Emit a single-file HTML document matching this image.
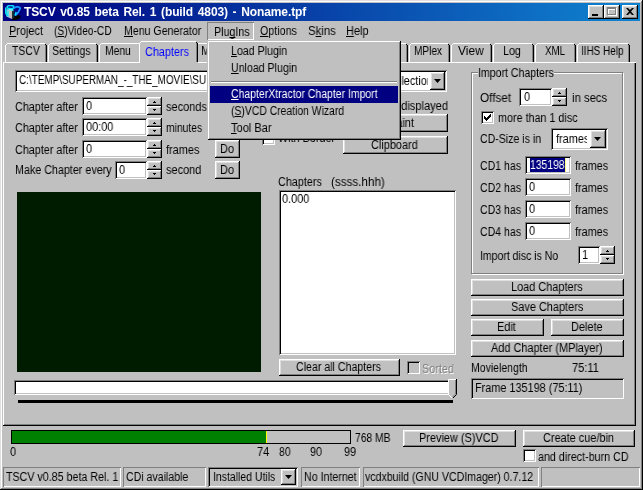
<!DOCTYPE html>
<html><head><meta charset="utf-8"><title>TSCV</title><style>
html,body{margin:0;padding:0}
body{width:643px;height:490px;overflow:hidden;background:#c0c0c0;position:relative;font:12px/16px "Liberation Sans",sans-serif;color:#000}
body div,body svg,body i{position:absolute;display:block}
.t{height:16px;line-height:16px;white-space:pre;transform-origin:0 50%;will-change:transform}
.t u{text-decoration:underline;text-decoration-skip-ink:none;text-underline-offset:1px;text-decoration-thickness:1px}
.btn{background:#c0c0c0;box-shadow:inset -1px -1px #000, inset 1px 1px #fff, inset -2px -2px #808080, inset 2px 2px #dfdfdf}
.edit{box-shadow:inset 1px 1px #808080, inset -1px -1px #fff, inset 2px 2px #000, inset -2px -2px #c0c0c0}
.tab{background:#c0c0c0}
</style></head><body>
<div class="" style="left:0px;top:0px;width:642px;height:1px;background:#dfdfdf"></div>
<div class="" style="left:0px;top:0px;width:1px;height:489px;background:#dfdfdf"></div>
<div class="" style="left:1px;top:1px;width:640px;height:1px;background:#fff"></div>
<div class="" style="left:1px;top:1px;width:1px;height:488px;background:#fff"></div>
<div class="" style="left:1px;top:488px;width:641px;height:1px;background:#808080"></div>
<div class="" style="left:641px;top:1px;width:1px;height:488px;background:#808080"></div>
<div class="" style="left:0px;top:489px;width:643px;height:1px;background:#000"></div>
<div class="" style="left:642px;top:0px;width:1px;height:490px;background:#000"></div>
<div class="" style="left:3px;top:3px;width:637px;height:18px;background:linear-gradient(to right,#000080,#1084d0)"></div>
<svg style="left:5px;top:5px" width="16" height="15" viewBox="0 0 16 15">
<polygon points="7,14.5 10,10 15.5,10.5 15.5,13 11,15 7,15" fill="#000"/>
<polygon points="1.5,4 7,6 7,14 1.5,11.5" fill="#c8c0c0"/>
<polygon points="7,6 9.2,5 9.2,13 7,14" fill="#183030"/>
<polygon points="1.5,4 5,2.6 9.2,5 7,6.2" fill="#50f0ff"/>
<polygon points="4,4.2 6.2,4.2 6.6,5.2 4.4,5.2" fill="#fff"/>
<polygon points="1.5,5 4,6 4.2,12.5 1.5,11" fill="#30e8ff" opacity="0.75"/>
<ellipse cx="5.5" cy="2.1" rx="3.4" ry="1.7" fill="none" stroke="#00e8ff" stroke-width="1.5"/>
<path d="M0.8,2.5 L0.8,8 L2.5,11" fill="none" stroke="#00e0f0" stroke-width="1.6"/>
<path d="M9,3.2 Q12.5,0.2 15.3,3.2 Q14,7 10.3,10.5" fill="none" stroke="#1890ff" stroke-width="1.8"/>
<path d="M11.2,7 L10,10.5" fill="none" stroke="#00e8ff" stroke-width="1.4"/>
</svg>
<div class="btn" style="left:588px;top:5px;width:16px;height:14px;"><div style="left:4px;top:9px;width:6px;height:2px;background:#000"></div></div>
<div class="btn" style="left:604px;top:5px;width:16px;height:14px;"><div style="left:4px;top:3px;width:9px;height:8px;box-sizing:border-box;border:1px solid #fff;border-top:2px solid #fff"></div><div style="left:3px;top:2px;width:9px;height:8px;box-sizing:border-box;border:1px solid #808080;border-top:2px solid #808080"></div></div>
<div class="btn" style="left:622px;top:5px;width:16px;height:14px;"><svg style="left:4px;top:3px" width="8" height="7" viewBox="0 0 8 7"><path d="M0,0 L2,0 L4,2 L6,0 L8,0 L5,3.5 L8,7 L6,7 L4,5 L2,7 L0,7 L3,3.5 Z" fill="#000"/></svg></div>
<div class="" style="left:207px;top:22px;width:47px;height:18px;box-shadow:inset 1px 1px #808080, inset -1px -1px #fff"></div>
<div class="" style="left:3px;top:62px;width:633px;height:364px;background:#c0c0c0;box-shadow:inset 0 -1px #000, inset 1px 0 #fff, inset 0 1px #fff, inset -1px 0 #000, inset -2px -2px #808080;z-index:2"></div>
<div class="tab" style="left:5px;top:43px;width:42px;height:19px;z-index:1"><i style="left:0;top:2px;width:1px;bottom:0;background:#fff"></i><i style="left:1px;top:1px;width:1px;height:1px;background:#fff"></i><i style="left:2px;top:0;right:2px;height:1px;background:#fff"></i><i style="right:1px;top:1px;width:1px;height:1px;background:#000"></i><i style="right:0;top:2px;width:1px;bottom:0px;background:#000"></i><i style="right:1px;top:2px;width:1px;bottom:0px;background:#808080"></i></div>
<div class="tab" style="left:48px;top:43px;width:50px;height:19px;z-index:1"><i style="left:0;top:2px;width:1px;bottom:0;background:#fff"></i><i style="left:1px;top:1px;width:1px;height:1px;background:#fff"></i><i style="left:2px;top:0;right:2px;height:1px;background:#fff"></i><i style="right:1px;top:1px;width:1px;height:1px;background:#000"></i><i style="right:0;top:2px;width:1px;bottom:0px;background:#000"></i><i style="right:1px;top:2px;width:1px;bottom:0px;background:#808080"></i></div>
<div class="tab" style="left:99px;top:43px;width:42px;height:19px;z-index:1"><i style="left:0;top:2px;width:1px;bottom:0;background:#fff"></i><i style="left:1px;top:1px;width:1px;height:1px;background:#fff"></i><i style="left:2px;top:0;right:2px;height:1px;background:#fff"></i><i style="right:1px;top:1px;width:1px;height:1px;background:#000"></i><i style="right:0;top:2px;width:1px;bottom:0px;background:#000"></i><i style="right:1px;top:2px;width:1px;bottom:0px;background:#808080"></i></div>
<div class="tab" style="left:139px;top:41px;width:59px;height:22px;z-index:3"><i style="left:0;top:2px;width:1px;bottom:0;background:#fff"></i><i style="left:1px;top:1px;width:1px;height:1px;background:#fff"></i><i style="left:2px;top:0;right:2px;height:1px;background:#fff"></i><i style="right:1px;top:1px;width:1px;height:1px;background:#000"></i><i style="right:0;top:2px;width:1px;bottom:1px;background:#000"></i><i style="right:1px;top:2px;width:1px;bottom:1px;background:#808080"></i></div>
<div class="tab" style="left:196px;top:43px;width:54px;height:19px;z-index:1"><i style="left:0;top:2px;width:1px;bottom:0;background:#fff"></i><i style="left:1px;top:1px;width:1px;height:1px;background:#fff"></i><i style="left:2px;top:0;right:2px;height:1px;background:#fff"></i><i style="right:1px;top:1px;width:1px;height:1px;background:#000"></i><i style="right:0;top:2px;width:1px;bottom:0px;background:#000"></i><i style="right:1px;top:2px;width:1px;bottom:0px;background:#808080"></i></div>
<div class="tab" style="left:251px;top:43px;width:49px;height:19px;z-index:1"><i style="left:0;top:2px;width:1px;bottom:0;background:#fff"></i><i style="left:1px;top:1px;width:1px;height:1px;background:#fff"></i><i style="left:2px;top:0;right:2px;height:1px;background:#fff"></i><i style="right:1px;top:1px;width:1px;height:1px;background:#000"></i><i style="right:0;top:2px;width:1px;bottom:0px;background:#000"></i><i style="right:1px;top:2px;width:1px;bottom:0px;background:#808080"></i></div>
<div class="tab" style="left:301px;top:43px;width:49px;height:19px;z-index:1"><i style="left:0;top:2px;width:1px;bottom:0;background:#fff"></i><i style="left:1px;top:1px;width:1px;height:1px;background:#fff"></i><i style="left:2px;top:0;right:2px;height:1px;background:#fff"></i><i style="right:1px;top:1px;width:1px;height:1px;background:#000"></i><i style="right:0;top:2px;width:1px;bottom:0px;background:#000"></i><i style="right:1px;top:2px;width:1px;bottom:0px;background:#808080"></i></div>
<div class="tab" style="left:351px;top:43px;width:57px;height:19px;z-index:1"><i style="left:0;top:2px;width:1px;bottom:0;background:#fff"></i><i style="left:1px;top:1px;width:1px;height:1px;background:#fff"></i><i style="left:2px;top:0;right:2px;height:1px;background:#fff"></i><i style="right:1px;top:1px;width:1px;height:1px;background:#000"></i><i style="right:0;top:2px;width:1px;bottom:0px;background:#000"></i><i style="right:1px;top:2px;width:1px;bottom:0px;background:#808080"></i></div>
<div class="tab" style="left:409px;top:43px;width:41px;height:19px;z-index:1"><i style="left:0;top:2px;width:1px;bottom:0;background:#fff"></i><i style="left:1px;top:1px;width:1px;height:1px;background:#fff"></i><i style="left:2px;top:0;right:2px;height:1px;background:#fff"></i><i style="right:1px;top:1px;width:1px;height:1px;background:#000"></i><i style="right:0;top:2px;width:1px;bottom:0px;background:#000"></i><i style="right:1px;top:2px;width:1px;bottom:0px;background:#808080"></i></div>
<div class="tab" style="left:451px;top:43px;width:41px;height:19px;z-index:1"><i style="left:0;top:2px;width:1px;bottom:0;background:#fff"></i><i style="left:1px;top:1px;width:1px;height:1px;background:#fff"></i><i style="left:2px;top:0;right:2px;height:1px;background:#fff"></i><i style="right:1px;top:1px;width:1px;height:1px;background:#000"></i><i style="right:0;top:2px;width:1px;bottom:0px;background:#000"></i><i style="right:1px;top:2px;width:1px;bottom:0px;background:#808080"></i></div>
<div class="tab" style="left:493px;top:43px;width:41px;height:19px;z-index:1"><i style="left:0;top:2px;width:1px;bottom:0;background:#fff"></i><i style="left:1px;top:1px;width:1px;height:1px;background:#fff"></i><i style="left:2px;top:0;right:2px;height:1px;background:#fff"></i><i style="right:1px;top:1px;width:1px;height:1px;background:#000"></i><i style="right:0;top:2px;width:1px;bottom:0px;background:#000"></i><i style="right:1px;top:2px;width:1px;bottom:0px;background:#808080"></i></div>
<div class="tab" style="left:535px;top:43px;width:41px;height:19px;z-index:1"><i style="left:0;top:2px;width:1px;bottom:0;background:#fff"></i><i style="left:1px;top:1px;width:1px;height:1px;background:#fff"></i><i style="left:2px;top:0;right:2px;height:1px;background:#fff"></i><i style="right:1px;top:1px;width:1px;height:1px;background:#000"></i><i style="right:0;top:2px;width:1px;bottom:0px;background:#000"></i><i style="right:1px;top:2px;width:1px;bottom:0px;background:#808080"></i></div>
<div class="tab" style="left:577px;top:43px;width:53px;height:19px;z-index:1"><i style="left:0;top:2px;width:1px;bottom:0;background:#fff"></i><i style="left:1px;top:1px;width:1px;height:1px;background:#fff"></i><i style="left:2px;top:0;right:2px;height:1px;background:#fff"></i><i style="right:1px;top:1px;width:1px;height:1px;background:#000"></i><i style="right:0;top:2px;width:1px;bottom:0px;background:#000"></i><i style="right:1px;top:2px;width:1px;bottom:0px;background:#808080"></i></div>
<div class="edit" style="left:15px;top:70px;width:337px;height:22px;background:#fff;z-index:5;"></div>
<div class="edit" style="left:354px;top:70px;width:93px;height:22px;background:#fff;z-index:5;"></div>
<div class="btn" style="left:430px;top:72px;width:15px;height:18px;z-index:7;"><svg style="left:4px;top:7px" width="7" height="4" viewBox="0 0 7 4"><path d="M0,0 L7,0 L3.5,4 Z" fill="#000"/></svg></div>
<div class="edit" style="left:82px;top:97px;width:65px;height:18px;background:#fff;z-index:5;"></div>
<div class="btn" style="left:147px;top:97px;width:15px;height:9px;z-index:5;"><svg style="left:6px;top:4px" width="3" height="2" viewBox="0 0 3 2" shape-rendering="crispEdges"><path d="M1,0h1v1h-1z M0,1h3v1h-3z" fill="#000"/></svg></div>
<div class="btn" style="left:147px;top:106px;width:15px;height:9px;z-index:5;"><svg style="left:6px;top:3px" width="3" height="2" viewBox="0 0 3 2" shape-rendering="crispEdges"><path d="M0,0h3v1h-3z M1,1h1v1h-1z" fill="#000"/></svg></div>
<div class="edit" style="left:82px;top:118px;width:65px;height:18px;background:#fff;z-index:5;"></div>
<div class="btn" style="left:147px;top:118px;width:15px;height:9px;z-index:5;"><svg style="left:6px;top:4px" width="3" height="2" viewBox="0 0 3 2" shape-rendering="crispEdges"><path d="M1,0h1v1h-1z M0,1h3v1h-3z" fill="#000"/></svg></div>
<div class="btn" style="left:147px;top:127px;width:15px;height:9px;z-index:5;"><svg style="left:6px;top:3px" width="3" height="2" viewBox="0 0 3 2" shape-rendering="crispEdges"><path d="M0,0h3v1h-3z M1,1h1v1h-1z" fill="#000"/></svg></div>
<div class="edit" style="left:82px;top:140px;width:65px;height:18px;background:#fff;z-index:5;"></div>
<div class="btn" style="left:147px;top:140px;width:15px;height:9px;z-index:5;"><svg style="left:6px;top:4px" width="3" height="2" viewBox="0 0 3 2" shape-rendering="crispEdges"><path d="M1,0h1v1h-1z M0,1h3v1h-3z" fill="#000"/></svg></div>
<div class="btn" style="left:147px;top:149px;width:15px;height:9px;z-index:5;"><svg style="left:6px;top:3px" width="3" height="2" viewBox="0 0 3 2" shape-rendering="crispEdges"><path d="M0,0h3v1h-3z M1,1h1v1h-1z" fill="#000"/></svg></div>
<div class="edit" style="left:115px;top:161px;width:32px;height:18px;background:#fff;z-index:5;"></div>
<div class="btn" style="left:147px;top:161px;width:15px;height:9px;z-index:5;"><svg style="left:6px;top:4px" width="3" height="2" viewBox="0 0 3 2" shape-rendering="crispEdges"><path d="M1,0h1v1h-1z M0,1h3v1h-3z" fill="#000"/></svg></div>
<div class="btn" style="left:147px;top:170px;width:15px;height:9px;z-index:5;"><svg style="left:6px;top:3px" width="3" height="2" viewBox="0 0 3 2" shape-rendering="crispEdges"><path d="M0,0h3v1h-3z M1,1h1v1h-1z" fill="#000"/></svg></div>
<div class="btn" style="left:215px;top:97px;width:25px;height:18px;z-index:5;"></div>
<div class="btn" style="left:215px;top:118px;width:25px;height:18px;z-index:5;"></div>
<div class="btn" style="left:215px;top:140px;width:25px;height:18px;z-index:5;"></div>
<div class="btn" style="left:215px;top:161px;width:25px;height:18px;z-index:5;"></div>
<div class="edit" style="left:262px;top:132px;width:13px;height:13px;background:#fff;z-index:5;"></div>
<div class="btn" style="left:343px;top:114px;width:105px;height:18px;z-index:5;"></div>
<div class="btn" style="left:343px;top:136px;width:105px;height:18px;z-index:5;"></div>
<div class="" style="left:17px;top:192px;width:244px;height:180px;background:#001c00;z-index:5;"></div>
<div class="edit" style="left:279px;top:190px;width:177px;height:165px;background:#fff;z-index:5;"></div>
<div class="btn" style="left:279px;top:359px;width:121px;height:17px;z-index:5;"></div>
<div class="edit" style="left:407px;top:361px;width:13px;height:13px;background:#c0c0c0;z-index:5;"></div>
<div class="edit" style="left:14px;top:380px;width:437px;height:15px;background:#fff;z-index:5;"></div>
<div class="" style="left:18px;top:400px;width:435px;height:3px;background:#000;z-index:5;"></div>
<svg style="left:448px;top:379px;z-index:8" width="9" height="20" viewBox="0 0 9 20">
<path d="M0,0 H9 V16 L4.5,20 L0,16 Z" fill="#c0c0c0"/>
<path d="M0.5,16 V0.5 H8" fill="none" stroke="#fff"/>
<path d="M8.5,0 V15.5 L4.5,19.5" fill="none" stroke="#000"/>
<path d="M7.5,1 V15 L4.5,18" fill="none" stroke="#808080"/>
<path d="M0.5,15.5 L4.5,19.5" fill="none" stroke="#fff"/>
</svg>
<div class="" style="left:472px;top:73px;width:152px;height:202px;box-shadow:inset 1px 1px #fff, inset -1px -1px #fff;z-index:4"></div>
<div class="" style="left:471px;top:72px;width:152px;height:202px;box-shadow:inset 1px 1px #808080, inset -1px -1px #808080;z-index:5;"></div>
<div class="" style="left:478px;top:66px;width:76px;height:14px;background:#c0c0c0;z-index:5"></div>
<div class="edit" style="left:519px;top:88px;width:33px;height:18px;background:#fff;z-index:5;"></div>
<div class="btn" style="left:552px;top:88px;width:15px;height:9px;z-index:5;"><svg style="left:6px;top:4px" width="3" height="2" viewBox="0 0 3 2" shape-rendering="crispEdges"><path d="M1,0h1v1h-1z M0,1h3v1h-3z" fill="#000"/></svg></div>
<div class="btn" style="left:552px;top:97px;width:15px;height:9px;z-index:5;"><svg style="left:6px;top:3px" width="3" height="2" viewBox="0 0 3 2" shape-rendering="crispEdges"><path d="M0,0h3v1h-3z M1,1h1v1h-1z" fill="#000"/></svg></div>
<div class="edit" style="left:481px;top:111px;width:13px;height:13px;background:#fff;z-index:5;"><svg style="left:3px;top:3px" width="7" height="7" viewBox="0 0 7 7" shape-rendering="crispEdges"><path d="M0,2h1v3h-1z M1,3h1v3h-1z M2,4h1v3h-1z M3,3h1v3h-1z M4,2h1v3h-1z M5,1h1v3h-1z M6,0h1v3h-1z" fill="#000"/></svg></div>
<div class="edit" style="left:551px;top:128px;width:57px;height:22px;background:#fff;z-index:5;"></div>
<div class="btn" style="left:590px;top:130px;width:16px;height:18px;z-index:7;"><svg style="left:4px;top:7px" width="7" height="4" viewBox="0 0 7 4"><path d="M0,0 L7,0 L3.5,4 Z" fill="#000"/></svg></div>
<div class="edit" style="left:525px;top:156px;width:46px;height:18px;background:#fff;z-index:5;"></div>
<div class="" style="left:530px;top:158px;width:35px;height:14px;background:#000080;z-index:6"></div>
<div class="" style="left:565px;top:158px;width:1px;height:14px;background:#ffff80;z-index:7"></div>
<div class="edit" style="left:525px;top:178px;width:46px;height:18px;background:#fff;z-index:5;"></div>
<div class="edit" style="left:525px;top:200px;width:46px;height:18px;background:#fff;z-index:5;"></div>
<div class="edit" style="left:525px;top:222px;width:46px;height:18px;background:#fff;z-index:5;"></div>
<div class="edit" style="left:578px;top:246px;width:22px;height:18px;background:#fff;z-index:5;"></div>
<div class="btn" style="left:600px;top:246px;width:15px;height:9px;z-index:5;"><svg style="left:6px;top:4px" width="3" height="2" viewBox="0 0 3 2" shape-rendering="crispEdges"><path d="M1,0h1v1h-1z M0,1h3v1h-3z" fill="#000"/></svg></div>
<div class="btn" style="left:600px;top:255px;width:15px;height:9px;z-index:5;"><svg style="left:6px;top:3px" width="3" height="2" viewBox="0 0 3 2" shape-rendering="crispEdges"><path d="M0,0h3v1h-3z M1,1h1v1h-1z" fill="#000"/></svg></div>
<div class="btn" style="left:471px;top:279px;width:153px;height:17px;z-index:5;"></div>
<div class="btn" style="left:471px;top:299px;width:153px;height:17px;z-index:5;"></div>
<div class="btn" style="left:471px;top:319px;width:73px;height:17px;z-index:5;"></div>
<div class="btn" style="left:551px;top:319px;width:73px;height:17px;z-index:5;"></div>
<div class="btn" style="left:471px;top:340px;width:153px;height:17px;z-index:5;"></div>
<div class="edit" style="left:471px;top:378px;width:153px;height:21px;background:#c0c0c0;z-index:5;"></div>
<div class="" style="left:11px;top:430px;width:340px;height:14px;background:#c0c0c0;box-shadow:inset 0 0 0 1px #000;z-index:5;"></div>
<div class="" style="left:12px;top:431px;width:254px;height:12px;background:#008000;z-index:6"></div>
<div class="" style="left:266px;top:431px;width:1px;height:12px;background:#ffff00;z-index:6"></div>
<div class="btn" style="left:403px;top:430px;width:113px;height:17px;z-index:5;"></div>
<div class="btn" style="left:523px;top:430px;width:112px;height:17px;z-index:5;"></div>
<div class="edit" style="left:523px;top:449px;width:13px;height:13px;background:#fff;z-index:5;"></div>
<div class="" style="left:3px;top:467px;width:118px;height:20px;box-shadow:inset 1px 1px #808080, inset -1px -1px #fff"></div>
<div class="" style="left:123px;top:467px;width:83px;height:20px;box-shadow:inset 1px 1px #808080, inset -1px -1px #fff"></div>
<div class="edit" style="left:208px;top:467px;width:90px;height:20px;background:#c0c0c0;z-index:5;"></div>
<div class="btn" style="left:281px;top:469px;width:15px;height:16px;z-index:7;"><svg style="left:4px;top:6px" width="7" height="4" viewBox="0 0 7 4"><path d="M0,0 L7,0 L3.5,4 Z" fill="#000"/></svg></div>
<div class="" style="left:301px;top:467px;width:59px;height:20px;box-shadow:inset 1px 1px #808080, inset -1px -1px #fff"></div>
<div class="" style="left:363px;top:467px;width:176px;height:20px;box-shadow:inset 1px 1px #808080, inset -1px -1px #fff"></div>
<div class="" style="left:541px;top:467px;width:99px;height:20px;box-shadow:inset 1px 1px #808080, inset -1px -1px #fff"></div>
<div class="" style="left:207px;top:40px;width:194px;height:100px;background:#c0c0c0;z-index:20;box-shadow:inset 1px 1px #c0c0c0, inset -1px -1px #000, inset 2px 2px #fff, inset -2px -2px #808080"></div>
<div class="" style="left:210px;top:86px;width:188px;height:17px;background:#000080;z-index:21"></div>
<div class="" style="left:211px;top:81px;width:186px;height:1px;background:#808080;z-index:21"></div>
<div class="" style="left:211px;top:82px;width:186px;height:1px;background:#fff;z-index:21"></div>
<div class="t" style="top:4px;color:#fff;letter-spacing:-0.11px;word-spacing:1.5px;font-weight:bold;left:23.5px;">TSCV v0.85 beta Rel. 1 (build 4803) - Noname.tpf</div>
<div class="t" style="top:23px;color:#000;left:8.5px;transform:scaleX(0.9101);"><u>P</u>roject</div>
<div class="t" style="top:23px;color:#000;left:53.7px;transform:scaleX(0.8494);">(<u>S</u>)Video-CD</div>
<div class="t" style="top:23px;color:#000;left:123.9px;transform:scaleX(0.8834);"><u>M</u>enu Generator</div>
<div class="t" style="top:24px;color:#000;left:213.9px;transform:scaleX(0.8918);">Plu<u>g</u>Ins</div>
<div class="t" style="top:23px;color:#000;left:259.5px;transform:scaleX(0.8922);"><u>O</u>ptions</div>
<div class="t" style="top:23px;color:#000;left:308.3px;transform:scaleX(0.9474);">S<u>k</u>ins</div>
<div class="t" style="top:23px;color:#000;left:345.5px;transform:scaleX(0.9154);"><u>H</u>elp</div>
<div class="t" style="top:43px;color:#000;left:11.5px;transform:scaleX(0.8714);z-index:2;">TSCV</div>
<div class="t" style="top:43px;color:#000;left:52.2px;transform:scaleX(0.8925);z-index:2;">Settings</div>
<div class="t" style="top:43px;color:#000;left:105.3px;transform:scaleX(0.8591);z-index:2;">Menu</div>
<div class="t" style="top:43.5px;color:#0000ff;left:145.1px;transform:scaleX(0.9034);z-index:4;">Chapters</div>
<div class="t" style="top:43px;color:#000;left:201.1px;transform:scaleX(0.91);z-index:2;">M</div>
<div class="t" style="top:43px;color:#000;left:413.9px;transform:scaleX(0.8397);z-index:2;">MPlex</div>
<div class="t" style="top:43px;color:#000;left:457.5px;transform:scaleX(0.9924);z-index:2;">View</div>
<div class="t" style="top:43px;color:#000;left:503.2px;transform:scaleX(0.8936);z-index:2;">Log</div>
<div class="t" style="top:43px;color:#000;left:544.5px;transform:scaleX(0.8142);z-index:2;">XML</div>
<div class="t" style="top:43px;color:#000;left:581.3px;transform:scaleX(0.8275);z-index:2;">IIHS Help</div>
<div class="t" style="top:72px;color:#000;left:19px;transform:scaleX(0.8253);z-index:6;">C:\TEMP\SUPERMAN_-_THE_MOVIE\SU</div>
<div class="t" style="top:73px;color:#000;left:387.5px;transform:scaleX(0.91);z-index:6;overflow:hidden;width:44.0px;">Selection</div>
<div class="t" style="top:98.5px;color:#000;left:14.5px;transform:scaleX(0.898);z-index:6;">Chapter after</div>
<div class="t" style="top:98px;color:#000;left:86px;transform:scaleX(0.91);z-index:6;">0</div>
<div class="t" style="top:98.5px;color:#000;left:166.2px;transform:scaleX(0.9149);z-index:6;">seconds</div>
<div class="t" style="top:119.5px;color:#000;left:14.5px;transform:scaleX(0.898);z-index:6;">Chapter after</div>
<div class="t" style="top:119px;color:#000;left:86px;transform:scaleX(0.91);z-index:6;">00:00</div>
<div class="t" style="top:119.5px;color:#000;left:166.2px;transform:scaleX(0.8613);z-index:6;">minutes</div>
<div class="t" style="top:141.5px;color:#000;left:14.5px;transform:scaleX(0.898);z-index:6;">Chapter after</div>
<div class="t" style="top:141px;color:#000;left:86px;transform:scaleX(0.91);z-index:6;">0</div>
<div class="t" style="top:141.5px;color:#000;left:166.2px;transform:scaleX(0.9104);z-index:6;">frames</div>
<div class="t" style="top:162px;color:#000;left:14.5px;transform:scaleX(0.8941);z-index:6;">Make Chapter every</div>
<div class="t" style="top:162px;color:#000;left:119px;transform:scaleX(0.91);z-index:6;">0</div>
<div class="t" style="top:162px;color:#000;left:166.2px;transform:scaleX(0.9121);z-index:6;">second</div>
<div class="t" style="top:97.5px;color:#000;left:219.8px;transform:scaleX(0.91);z-index:6;">Do</div>
<div class="t" style="top:118.5px;color:#000;left:219.8px;transform:scaleX(0.91);z-index:6;">Do</div>
<div class="t" style="top:140.5px;color:#000;left:219.8px;transform:scaleX(0.91);z-index:6;">Do</div>
<div class="t" style="top:161.5px;color:#000;left:219.8px;transform:scaleX(0.91);z-index:6;">Do</div>
<div class="t" style="top:130px;color:#000;left:277.5px;transform:scaleX(0.9012);z-index:6;">With Border</div>
<div class="t" style="top:97.5px;color:#000;left:365.5px;transform:scaleX(0.9254);z-index:6;">Frame displayed</div>
<div class="t" style="top:114.5px;color:#000;left:376.3px;transform:scaleX(0.9184);z-index:6;">Repaint</div>
<div class="t" style="top:136.5px;color:#000;left:371.4px;transform:scaleX(0.91);z-index:6;">Clipboard</div>
<div class="t" style="top:173.5px;color:#000;left:278.3px;transform:scaleX(0.8993);z-index:6;">Chapters</div>
<div class="t" style="top:173.5px;color:#000;left:331.3px;transform:scaleX(0.9718);z-index:6;">(ssss.hhh)</div>
<div class="t" style="top:191px;color:#000;left:282.3px;transform:scaleX(0.91);z-index:6;">0.000</div>
<div class="t" style="top:359px;color:#000;left:296.3px;transform:scaleX(0.885);z-index:6;">Clear all Chapters</div>
<div class="t" style="top:361px;color:#808080;text-shadow:1px 1px 0 #fff;left:421.7px;transform:scaleX(0.9022);z-index:6;">Sorted</div>
<div class="t" style="top:65.3px;color:#000;left:477.8px;transform:scaleX(0.8809);z-index:6;">Import Chapters</div>
<div class="t" style="top:89.5px;color:#000;left:480px;transform:scaleX(0.9781);z-index:6;">Offset</div>
<div class="t" style="top:89px;color:#000;left:523.5px;transform:scaleX(0.91);z-index:6;">0</div>
<div class="t" style="top:89.5px;color:#000;left:571.9px;transform:scaleX(0.9422);z-index:6;">in secs</div>
<div class="t" style="top:109.5px;color:#000;left:498px;transform:scaleX(0.8972);z-index:6;">more than 1 disc</div>
<div class="t" style="top:130.5px;color:#000;left:480px;transform:scaleX(0.8809);z-index:6;">CD-Size is in</div>
<div class="t" style="top:131px;color:#000;left:555.5px;transform:scaleX(0.91);z-index:6;overflow:hidden;width:34.2px;">frames</div>
<div class="t" style="top:157.5px;color:#000;left:480px;transform:scaleX(0.8803);z-index:6;">CD1 has</div>
<div class="t" style="top:157.5px;color:#000;left:574.5px;transform:scaleX(0.9022);z-index:6;">frames</div>
<div class="t" style="top:157px;color:#fff;left:530px;transform:scaleX(0.864);z-index:7;">135198</div>
<div class="t" style="top:179.5px;color:#000;left:480px;transform:scaleX(0.8803);z-index:6;">CD2 has</div>
<div class="t" style="top:179.5px;color:#000;left:574.5px;transform:scaleX(0.9022);z-index:6;">frames</div>
<div class="t" style="top:179px;color:#000;left:529.2px;transform:scaleX(0.91);z-index:6;">0</div>
<div class="t" style="top:201.5px;color:#000;left:480px;transform:scaleX(0.8803);z-index:6;">CD3 has</div>
<div class="t" style="top:201.5px;color:#000;left:574.5px;transform:scaleX(0.9022);z-index:6;">frames</div>
<div class="t" style="top:201px;color:#000;left:529.2px;transform:scaleX(0.91);z-index:6;">0</div>
<div class="t" style="top:223.5px;color:#000;left:480px;transform:scaleX(0.8803);z-index:6;">CD4 has</div>
<div class="t" style="top:223.5px;color:#000;left:574.5px;transform:scaleX(0.9022);z-index:6;">frames</div>
<div class="t" style="top:223px;color:#000;left:529.2px;transform:scaleX(0.91);z-index:6;">0</div>
<div class="t" style="top:247.5px;color:#000;left:480px;transform:scaleX(0.874);z-index:6;">Import disc is No</div>
<div class="t" style="top:247px;color:#000;left:581.5px;transform:scaleX(0.91);z-index:6;">1</div>
<div class="t" style="top:279px;color:#000;left:511.0px;transform:scaleX(0.91);z-index:6;">Load Chapters</div>
<div class="t" style="top:299px;color:#000;left:510.7px;transform:scaleX(0.91);z-index:6;">Save Chapters</div>
<div class="t" style="top:319px;color:#000;left:497.4px;transform:scaleX(0.91);z-index:6;">Edit</div>
<div class="t" style="top:319px;color:#000;left:571.0px;transform:scaleX(0.91);z-index:6;">Delete</div>
<div class="t" style="top:340px;color:#000;left:491.0px;transform:scaleX(0.91);z-index:6;">Add Chapter (MPlayer)</div>
<div class="t" style="top:359.5px;color:#000;left:470.5px;transform:scaleX(0.8746);z-index:6;">Movielength</div>
<div class="t" style="top:359.5px;color:#000;left:572px;transform:scaleX(0.9197);z-index:6;">75:11</div>
<div class="t" style="top:380px;color:#000;left:475.2px;transform:scaleX(0.9062);z-index:6;">Frame 135198 (75:11)</div>
<div class="t" style="top:444px;color:#000;left:10px;transform:scaleX(0.91);z-index:5;">0</div>
<div class="t" style="top:444px;color:#000;left:257.2px;transform:scaleX(0.9132);z-index:5;">74</div>
<div class="t" style="top:444px;color:#000;left:278.5px;transform:scaleX(0.8683);z-index:5;">80</div>
<div class="t" style="top:444px;color:#000;left:310.2px;transform:scaleX(0.8908);z-index:5;">90</div>
<div class="t" style="top:444px;color:#000;left:343.5px;transform:scaleX(0.8982);z-index:5;">99</div>
<div class="t" style="top:429.5px;color:#000;left:354.5px;transform:scaleX(0.8607);z-index:5;">768 MB</div>
<div class="t" style="top:430px;color:#000;left:419.1px;transform:scaleX(0.91);z-index:6;">Preview (S)VCD</div>
<div class="t" style="top:430px;color:#000;left:542.8px;transform:scaleX(0.91);z-index:6;">Create cue/bin</div>
<div class="t" style="top:448.5px;color:#000;left:538.2px;transform:scaleX(0.8936);z-index:5;">and direct-burn CD</div>
<div class="t" style="top:469px;color:#000;left:5.5px;transform:scaleX(0.8899);">TSCV v0.85 beta Rel. 1</div>
<div class="t" style="top:469px;color:#000;left:125.8px;transform:scaleX(0.8811);">CDi available</div>
<div class="t" style="top:469px;color:#000;left:213px;transform:scaleX(0.8729);z-index:6;">Installed Utils</div>
<div class="t" style="top:469px;color:#000;left:303.5px;transform:scaleX(0.8859);">No Internet</div>
<div class="t" style="top:469px;color:#000;left:365.3px;transform:scaleX(0.8813);">vcdxbuild (GNU VCDImager) 0.7.12</div>
<div class="t" style="top:43px;color:#000;left:231px;transform:scaleX(0.885);z-index:22;"><u>L</u>oad Plugin</div>
<div class="t" style="top:59.5px;color:#000;left:231px;transform:scaleX(0.8847);z-index:22;"><u>U</u>nload Plugin</div>
<div class="t" style="top:85.5px;color:#fff;left:231px;transform:scaleX(0.8722);z-index:22;"><u>C</u>hapterXtractor Chapter Import</div>
<div class="t" style="top:102.5px;color:#000;left:231px;transform:scaleX(0.8653);z-index:22;">(<u>S</u>)VCD Creation Wizard</div>
<div class="t" style="top:119.5px;color:#000;left:231px;transform:scaleX(0.9221);z-index:22;"><u>T</u>ool Bar</div>
</body></html>
